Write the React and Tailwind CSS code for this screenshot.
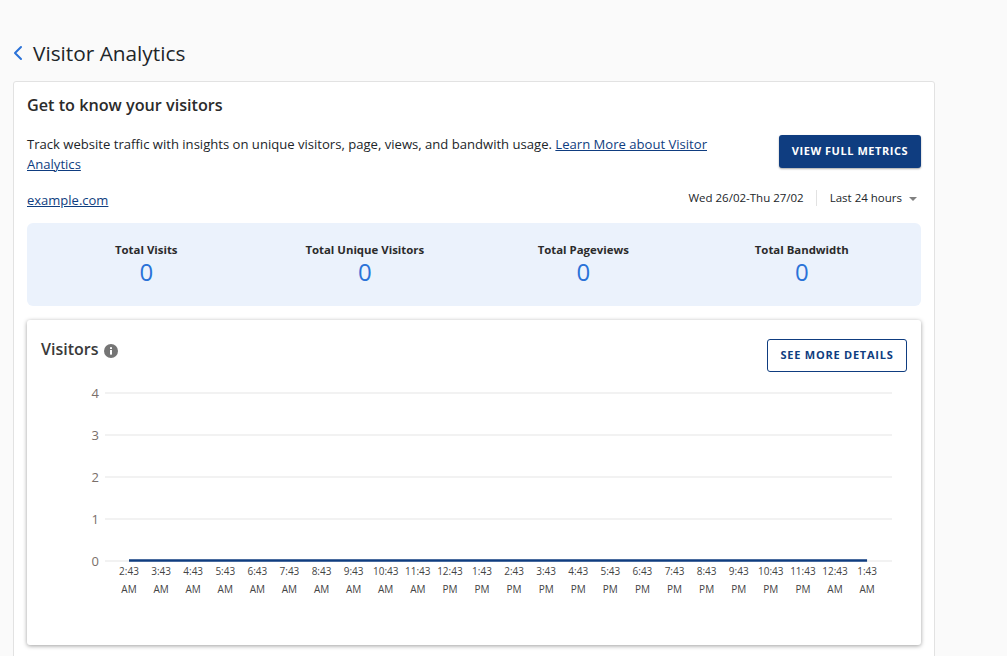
import { ChevronLeft } from "lucide-react";

const font = { fontFamily: '"Open Sans", sans-serif' };

const stats = ["Total Visits", "Total Unique Visitors", "Total Pageviews", "Total Bandwidth"];

const hours = [
  ["2:43", "AM"], ["3:43", "AM"], ["4:43", "AM"], ["5:43", "AM"], ["6:43", "AM"], ["7:43", "AM"],
  ["8:43", "AM"], ["9:43", "AM"], ["10:43", "AM"], ["11:43", "AM"], ["12:43", "PM"], ["1:43", "PM"],
  ["2:43", "PM"], ["3:43", "PM"], ["4:43", "PM"], ["5:43", "PM"], ["6:43", "PM"], ["7:43", "PM"],
  ["8:43", "PM"], ["9:43", "PM"], ["10:43", "PM"], ["11:43", "PM"], ["12:43", "AM"], ["1:43", "AM"],
];

function Chart() {
  // svg origin sits at x=27 of the page
  const left = 102;
  const step = 32.09;
  return (
    <svg width="892" height="225" className="block" style={font}>
      {[4, 3, 2, 1, 0].map((v, i) => {
        const y = 13 + i * 42;
        return (
          <g key={v}>
            <line x1="78" x2="865" y1={y} y2={y} stroke="#f2f2f2" strokeWidth="2" />
            <text x="72" y={y + 5} textAnchor="end" fontSize="13" fill="#7a6f6a">{v}</text>
          </g>
        );
      })}
      <line x1={left} x2={left + step * 23} y1="180.5" y2="180.5" stroke="#0f3d80" strokeWidth="2.5" />
      {hours.map(([t, m], i) => (
        <g key={i} fontSize="10" fill="#444" textAnchor="middle">
          <text x={left + step * i} y="195">{t}</text>
          <text x={left + step * i} y="213">{m}</text>
        </g>
      ))}
    </svg>
  );
}

export default function App() {
  return (
    <div className="h-[656px] overflow-hidden bg-[#fafafa] text-[#212529]" style={font}>
      <div className="w-[935px] pl-[13px] pt-[38px]">
        <div className="flex h-[30px] items-center">
          <ChevronLeft className="ml-[-7px] h-[24px] w-[24px] text-[#2a72d8]" strokeWidth={2} />
          <h1 className="ml-[3px] text-[20.8px] leading-[30px] text-[#212529]">Visitor Analytics</h1>
        </div>

        <div className="mt-[13px] rounded-[3px] border border-[#e2e2e2] bg-white px-[13px] pb-[40px]">
          <h2 className="pt-[12px] text-[16.2px] leading-[22px] font-semibold text-[#2b2b2b]">Get to know your visitors</h2>

          <div className="mt-[18px] flex items-start justify-between">
            <p className="w-[700px] text-[13.08px] leading-[20px]">
              Track website traffic with insights on unique visitors, page, views, and bandwith usage.{" "}
              <a className="text-[#0f3d80] underline">Learn More about Visitor Analytics</a>
            </p>
            <button className="mt-[1px] h-[33px] w-[142px] rounded-[3px] bg-[#0f3d80] text-[11px] font-bold tracking-[0.05em] text-white shadow-[0_1px_2px_rgba(0,0,0,0.35)]">
              VIEW FULL METRICS
            </button>
          </div>

          <div className="mt-[17px] flex h-[20px] items-center justify-between">
            <a className="text-[13px] text-[#0f3d80] underline">example.com</a>
            <div className="mb-[6px] flex items-center pr-[4px] text-[11.5px]">
              <span>Wed 26/02-Thu 27/02</span>
              <span className="ml-[12px] h-[16px] w-px bg-[#e2e2e2]" />
              <span className="ml-[13px]">Last 24 hours</span>
              <span className="ml-[7px] mt-[1px] h-0 w-0 border-x-[4px] border-t-[4px] border-x-transparent border-t-[#808080]" />
            </div>
          </div>

          <div className="mt-[12px] grid h-[83px] grid-cols-4 rounded-[6px] bg-[#ebf2fc] px-[10px] pt-[19px]">
            {stats.map((s) => (
              <div key={s} className="flex flex-col items-center">
                <span className="text-[11.4px] leading-[16px] font-bold text-[#2b2b2b]">{s}</span>
                <span className="text-[24px] leading-[28px] text-[#2a72d8]">0</span>
              </div>
            ))}
          </div>

          <div className="mt-[14px] h-[325px] rounded-[3px] bg-white shadow-[0_1px_4px_rgba(0,0,0,0.38)]">
            <div className="flex items-start justify-between pt-[19px] pr-[14px] pl-[14px]">
              <div className="mt-[-1px] flex items-center">
                <span className="text-[16px] leading-[22px] font-semibold text-[#3a3a3a]">Visitors</span>
                <svg className="ml-[6px] mt-[4px]" width="14" height="14" viewBox="0 0 14 14">
                  <circle cx="7" cy="7" r="7" fill="#757575" />
                  <rect x="6" y="6" width="2" height="4.6" fill="#fff" />
                  <rect x="6" y="3.2" width="2" height="1.8" fill="#fff" />
                </svg>
              </div>
              <button className="h-[33px] w-[140px] rounded-[3px] border border-[#0f3d80] bg-white text-[11px] font-bold tracking-[0.07em] text-[#0f3d80]">
                SEE MORE DETAILS
              </button>
            </div>
            <div className="mt-[8px]">
              <Chart />
            </div>
          </div>
        </div>
      </div>
    </div>
  );
}
